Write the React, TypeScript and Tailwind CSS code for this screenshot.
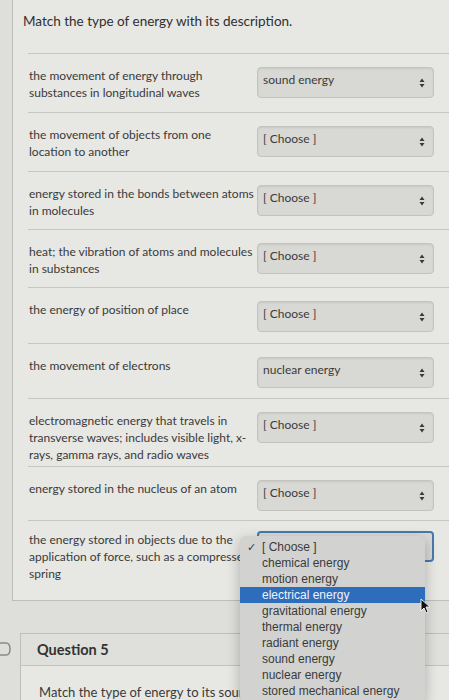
import React from "react";

type Row = { lines: string[]; value: string; h: number; pt?: number; focused?: boolean };

const rows: Row[] = [
  { lines: ["the movement of energy through", "substances in longitudinal waves"], value: "sound energy", h: 59 },
  { lines: ["the movement of objects from one", "location to another"], value: "[ Choose ]", h: 59 },
  { lines: ["energy stored in the bonds between atoms", "in molecules"], value: "[ Choose ]", h: 58 },
  { lines: ["heat; the vibration of atoms and molecules", "in substances"], value: "[ Choose ]", h: 58 },
  { lines: ["the energy of position of place"], value: "[ Choose ]", h: 56 },
  { lines: ["the movement of electrons"], value: "nuclear energy", h: 55 },
  {
    lines: ["electromagnetic energy that travels in", "transverse waves; includes visible light, x-", "rays, gamma rays, and radio waves"],
    value: "[ Choose ]",
    h: 68,
  },
  { lines: ["energy stored in the nucleus of an atom"], value: "[ Choose ]", h: 54 },
  {
    lines: ["the energy stored in objects due to the", "application of force, such as a compressed", "spring"],
    value: "[ Choose ]",
    h: 80,
    pt: 10,
    focused: true,
  },
];

const options = [
  "[ Choose ]",
  "chemical energy",
  "motion energy",
  "electrical energy",
  "gravitational energy",
  "thermal energy",
  "radiant energy",
  "sound energy",
  "nuclear energy",
  "stored mechanical energy",
];

function Arrows() {
  return (
    <svg width="6" height="10" viewBox="0 0 6 10" className="shrink-0">
      <path d="M3 0.5 L5.5 4 L0.5 4 Z" fill="#3a3a3a" />
      <path d="M3 9.5 L5.5 6 L0.5 6 Z" fill="#3a3a3a" />
    </svg>
  );
}

function Menu() {
  return (
    <div className="absolute left-[-17px] top-[5px] z-10 w-[185px] rounded-[6px] bg-[#d2d3d1] py-[3px] shadow-[0_4px_14px_rgba(0,0,0,0.25)] font-['Liberation_Sans',sans-serif] text-[12px] text-[#3a3a3a]">
      {options.map((o, i) => (
        <div
          key={o}
          className={
            "relative flex h-[16px] items-center pl-[22px] leading-none " +
            (i === 3 ? "bg-[#2e6dbb] text-[#eef3fb]" : "")
          }
        >
          {i === 0 && <span className="absolute left-[7px] text-[11px]">✓</span>}
          {o}
        </div>
      ))}
      {/* mouse pointer */}
      <svg width="10" height="16" viewBox="0 0 10 16" className="absolute left-[180px] top-[62px]">
        <path d="M1 1 L1 13 L4 10 L6 15 L8 14 L6 9 L10 9 Z" fill="#111" stroke="#eee" strokeWidth="1" />
      </svg>
    </div>
  );
}

function Select({ value, focused }: { value: string; focused?: boolean }) {
  return (
    <div className="relative w-[177px] shrink-0">
      <div
        className={
          "flex h-[31px] items-center justify-between rounded-[4px] bg-[#d8d8d5] pl-[5px] pr-[8px] text-[12px] text-[#3b3b3b] " +
          (focused ? "border-2 border-[#4a78ae]" : "border border-[#c3c3c0] shadow-[inset_0_1px_2px_rgba(0,0,0,0.08)]")
        }
      >
        <span className="-mt-[6px]">{focused ? "" : value}</span>
        <Arrows />
      </div>
      {focused && <Menu />}
    </div>
  );
}

export default function App() {
  return (
    <div className="h-[700px] w-[449px] overflow-hidden bg-[#dededb] font-['Lato',sans-serif] text-[#3a3a3a]">
      {/* Question card */}
      <div className="ml-[12px] border-b border-l border-[#bdbdba] bg-[#e7e7e4]">
        <div className="h-[53px] pl-[10px] pt-[11px] text-[13.5px] text-[#2f2f2f]">
          Match the type of energy with its description.
        </div>
        {rows.map((r, i) => (
          <div
            key={i}
            className="ml-[15px] flex gap-[4px] border-t border-[#c6c6c3]"
            style={{ height: r.h, paddingTop: r.pt ?? 13 }}
          >
            <div className="w-[225px] shrink-0 pl-[1px] text-[12px] leading-[17px]">
              {r.lines.map((l) => (
                <div key={l} className="whitespace-nowrap">
                  {l}
                </div>
              ))}
            </div>
            <Select value={r.value} focused={r.focused} />
          </div>
        ))}
      </div>

      {/* Next question */}
      <div className="relative mt-[32px] flex">
        <svg width="14" height="16" viewBox="0 0 14 16" className="absolute left-[-2px] top-[8px]">
          <path d="M0 2 L8 2 Q12 2 12 8 Q12 14 8 14 L0 14" fill="none" stroke="#8a8a88" strokeWidth="1.5" />
        </svg>
        <div className="ml-[20px] flex-1 border-l border-t border-[#bdbdba] bg-[#e7e7e4]">
          <div className="flex h-[32px] items-center border-b border-[#c3c3c0] bg-[#dfdfdc] pl-[16px] text-[14.5px] font-bold text-[#333]">
            Question 5
          </div>
          <div className="pl-[18px] pt-[17px] text-[13px] text-[#3a3a3a]">
            Match the type of energy to its source
          </div>
        </div>
      </div>
    </div>
  );
}
